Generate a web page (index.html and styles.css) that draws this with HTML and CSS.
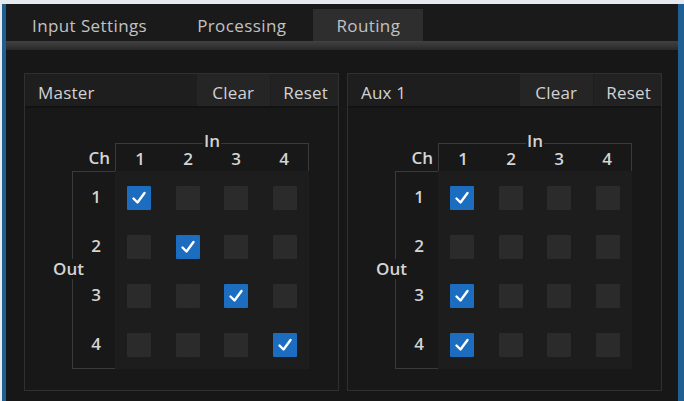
FILE: index.html
```html
<!DOCTYPE html>
<html>
<head>
<meta charset="utf-8">
<link rel="stylesheet" href="styles.css">
</head>
<body>
<div class="app">
  <div class="tabs">
    <div class="tab">Input Settings</div>
    <div class="tab">Processing</div>
    <div class="tab active">Routing</div>
  </div>
  <div class="tabline"></div>
  <div class="content">
    <div class="panel">
      <div class="phead">
        <div class="ptitle">Master</div>
        <div class="btn">Clear</div><div class="btn">Reset</div>
      </div>
      <div class="pbody">
        <div class="matrix">
          <div class="ch">Ch</div>
          <div class="inbox">
            <span class="inlabel">In</span>
            <span>1</span><span>2</span><span>3</span><span>4</span>
          </div>
          <div class="outbox">
            <span class="outlabel">Out</span>
            <span>1</span><span>2</span><span>3</span><span>4</span>
          </div>
          <div class="cells">
            <div class="cb on"><svg viewBox="0 0 24 24"><path d="M6.5 12.5 L10.5 16.5 L17.5 7"/></svg></div>
            <div class="cb"></div><div class="cb"></div><div class="cb"></div>
            <div class="cb"></div>
            <div class="cb on"><svg viewBox="0 0 24 24"><path d="M6.5 12.5 L10.5 16.5 L17.5 7"/></svg></div>
            <div class="cb"></div><div class="cb"></div>
            <div class="cb"></div><div class="cb"></div>
            <div class="cb on"><svg viewBox="0 0 24 24"><path d="M6.5 12.5 L10.5 16.5 L17.5 7"/></svg></div>
            <div class="cb"></div>
            <div class="cb"></div><div class="cb"></div><div class="cb"></div>
            <div class="cb on"><svg viewBox="0 0 24 24"><path d="M6.5 12.5 L10.5 16.5 L17.5 7"/></svg></div>
          </div>
        </div>
      </div>
    </div>
    <div class="panel">
      <div class="phead">
        <div class="ptitle">Aux 1</div>
        <div class="btn">Clear</div><div class="btn">Reset</div>
      </div>
      <div class="pbody">
        <div class="matrix">
          <div class="ch">Ch</div>
          <div class="inbox">
            <span class="inlabel">In</span>
            <span>1</span><span>2</span><span>3</span><span>4</span>
          </div>
          <div class="outbox">
            <span class="outlabel">Out</span>
            <span>1</span><span>2</span><span>3</span><span>4</span>
          </div>
          <div class="cells">
            <div class="cb on"><svg viewBox="0 0 24 24"><path d="M6.5 12.5 L10.5 16.5 L17.5 7"/></svg></div>
            <div class="cb"></div><div class="cb"></div><div class="cb"></div>
            <div class="cb"></div><div class="cb"></div><div class="cb"></div><div class="cb"></div>
            <div class="cb on"><svg viewBox="0 0 24 24"><path d="M6.5 12.5 L10.5 16.5 L17.5 7"/></svg></div>
            <div class="cb"></div><div class="cb"></div><div class="cb"></div>
            <div class="cb on"><svg viewBox="0 0 24 24"><path d="M6.5 12.5 L10.5 16.5 L17.5 7"/></svg></div>
            <div class="cb"></div><div class="cb"></div><div class="cb"></div>
          </div>
        </div>
      </div>
    </div>
  </div>
</div>
</body>
</html>
```

FILE: styles.css
```css
html, body {
  margin: 0;
  padding: 0;
  background: #e6eaee;
  font-family: "Open Sans", "Noto Sans", sans-serif;
}
.app {
  margin: 4px 0 0 2px;
  height: 397px;
  box-sizing: border-box;
  background: #161616;
  border-left: 4px solid #1f5f92;
  border-right: 6px solid #1f5f92;
  display: flex;
  flex-direction: column;
  overflow: hidden;
}
.tabs {
  height: 37px;
  background: #1a1a1a;
  display: flex;
  align-items: flex-end;
  gap: 4px;
  padding-left: 3px;
  box-sizing: border-box;
}
.tab {
  height: 32px;
  line-height: 34px;
  padding: 0 23px;
  color: #c2c2c2;
  font-size: 17px;
  letter-spacing: 0.4px;
}
.tab.active {
  background: #2e2e2e;
}
.tabline {
  height: 9px;
  background: linear-gradient(#414141, #343434 60%, #282828);
}
.content {
  flex: 1;
  display: flex;
  gap: 8px;
  padding: 23px 0 0 18px;
  background: #171717;
}
.panel {
  width: 315px;
  height: 318px;
  box-sizing: border-box;
  border: 1px solid #303030;
  background: #181818;
  display: flex;
  flex-direction: column;
}
.phead {
  height: 32px;
  display: flex;
  gap: 1px;
  background: #1e1e1e;
  border-bottom: 2px solid #121212;
  color: #d2d2d2;
  font-size: 17px;
  letter-spacing: 0.2px;
}
.ptitle {
  flex: 1;
  line-height: 37px;
  padding-left: 13px;
}
.btn {
  line-height: 37px;
  background: #252525;
  padding: 0 16px 0 15px;
}
.btn + .btn {
  background: #222222;
  padding: 0 10px 0 12px;
}
.pbody {
  flex: 1;
  padding: 35px 0 0 47px;
}
.matrix {
  display: grid;
  grid-template-columns: 43px 194px;
  grid-template-rows: 28px 198px;
  color: #d4d4d4;
  font-size: 17px;
  font-weight: 600;
}
.ch {
  text-align: right;
  padding-right: 5px;
  line-height: 30px;
}
.inbox {
  position: relative;
  border: 1px solid #3a3a3a;
  border-bottom: none;
  display: grid;
  grid-template-columns: repeat(4, 1fr);
  align-items: center;
  justify-items: center;
  padding-top: 1px;
}
.inlabel {
  position: absolute;
  top: -12px;
  left: 87px;
  background: #181818;
  padding: 0 1px;
  line-height: 18px;
}
.outbox {
  position: relative;
  border: 1px solid #3a3a3a;
  border-right: none;
  display: grid;
  grid-template-rows: repeat(4, 1fr);
  justify-items: end;
  align-items: center;
  padding: 0 14px 0 0;
}
.outlabel {
  position: absolute;
  left: -20px;
  top: 87px;
  background: #181818;
  line-height: 18px;
  padding: 1px 0;
}
.cells {
  background: #1d1d1d;
  display: grid;
  grid-template-columns: repeat(4, 1fr);
  grid-template-rows: repeat(4, 1fr);
  justify-items: center;
  align-items: center;
  padding-top: 3px;
}
.cb {
  width: 24px;
  height: 24px;
  background: #2b2b2b;
  border-radius: 1px;
}
.cb.on {
  background: #1c6dbf;
}
.cb svg {
  width: 24px;
  height: 24px;
  display: block;
}
.cb path {
  fill: none;
  stroke: #ffffff;
  stroke-width: 2.4;
  stroke-linecap: round;
  stroke-linejoin: round;
}
```
